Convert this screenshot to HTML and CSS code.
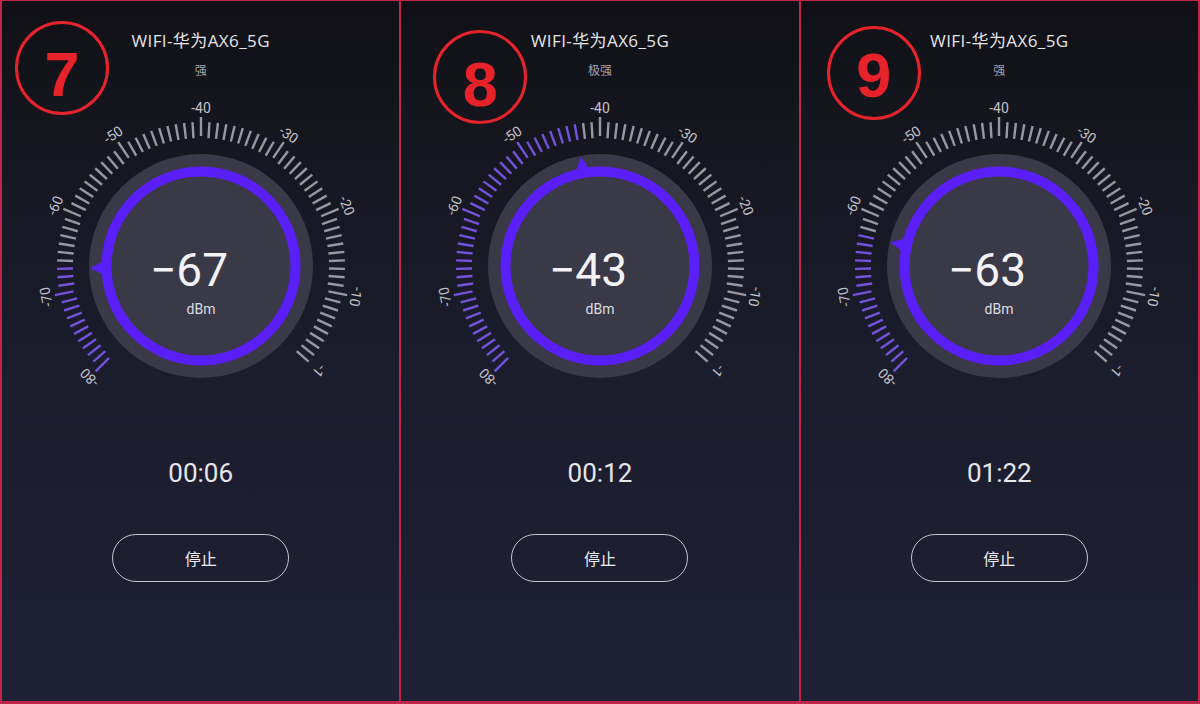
FILE: index.html
```html
<!DOCTYPE html>
<html lang="zh-CN">
<head>
    <meta charset="UTF-8">
    <title>WiFi 信号强度</title>
    <meta name="viewport" content="width=device-width, initial-scale=1">
    <link rel="stylesheet" href="styles.css">
</head>
<body>
    <div class="screens">
        <div class="panel">
            <div class="mark mark-7">7</div>
            <div class="ssid">WIFI-华为AX6_5G</div>
            <div class="level">强</div>
            <svg class="gauge" data-value="-67" width="360" height="320" viewBox="0 0 360 320"></svg>
            <div class="timer">00:06</div>
            <button class="stop-btn">停止</button>
        </div>
        <div class="panel">
            <div class="mark mark-8">8</div>
            <div class="ssid">WIFI-华为AX6_5G</div>
            <div class="level">极强</div>
            <svg class="gauge" data-value="-43" width="360" height="320" viewBox="0 0 360 320"></svg>
            <div class="timer">00:12</div>
            <button class="stop-btn">停止</button>
        </div>
        <div class="panel">
            <div class="mark mark-9">9</div>
            <div class="ssid">WIFI-华为AX6_5G</div>
            <div class="level">强</div>
            <svg class="gauge" data-value="-63" width="360" height="320" viewBox="0 0 360 320"></svg>
            <div class="timer">01:22</div>
            <button class="stop-btn">停止</button>
        </div>
    </div>
    <script>
        const NS = 'http://www.w3.org/2000/svg';
        const CX = 180, CY = 175;
        const STEP = 3.375; // degrees per dBm, -40 sits at the top

        function make(tag, attrs, text) {
            const node = document.createElementNS(NS, tag);
            for (const k in attrs) node.setAttribute(k, attrs[k]);
            if (text) node.textContent = text;
            return node;
        }

        function pt(deg, r) {
            const rad = deg * Math.PI / 180;
            return [CX + r * Math.sin(rad), CY - r * Math.cos(rad)];
        }

        document.querySelectorAll('.gauge').forEach(svg => {
            const value = Number(svg.dataset.value);

            // Scale ticks
            for (let v = -80; v <= -1; v++) {
                const a = (v + 40) * STEP;
                const major = v % 10 === 0;
                const [x1, y1] = pt(a, major ? 130 : 128);
                const [x2, y2] = pt(a, major ? 149 : 144);
                svg.appendChild(make('line', {
                    x1, y1, x2, y2,
                    class: v <= value ? 'tick on' : 'tick'
                }));
            }

            // Scale labels
            [-80, -70, -60, -50, -40, -30, -20, -10, -1].forEach(v => {
                const a = (v + 40) * STEP;
                const [x, y] = pt(a, 158);
                svg.appendChild(make('text', {
                    x, y,
                    class: 'scale-label',
                    transform: `rotate(${a} ${x} ${y})`
                }, String(v)));
            });

            // Dial
            svg.appendChild(make('circle', { cx: CX, cy: CY, r: 112, class: 'disc' }));
            svg.appendChild(make('circle', { cx: CX, cy: CY, r: 94.5, class: 'ring' }));

            // Pointer notch on the ring
            const a = (value + 40) * STEP;
            const tip = pt(a, 111);
            const l = pt(a - 4.2, 97);
            const r = pt(a + 4.2, 97);
            svg.appendChild(make('polygon', {
                points: `${tip.join(',')} ${l.join(',')} ${r.join(',')}`,
                class: 'notch'
            }));

            // Reading
            svg.appendChild(make('text', { x: CX - 12, y: 195, class: 'reading' }, '−' + Math.abs(value)));
            svg.appendChild(make('text', { x: CX, y: 223, class: 'unit' }, 'dBm'));
        });
    </script>
</body>
</html>
```

FILE: styles.css
```css
body { margin: 0; background: #c0264a; font-family: Roboto, "Noto Sans CJK SC", sans-serif; }
.screens { display: flex; gap: 2px; width: 1200px; height: 704px; padding: 1px 2px 3px; box-sizing: border-box; }
.panel { flex: 1; position: relative; display: flex; flex-direction: column; align-items: center; padding-top: 30px; background: linear-gradient(180deg, #101016 0%, #16161f 20%, #1b1c2c 50%, #1e2034 100%); }

.ssid { font-family: "Open Sans", "Noto Sans CJK SC", sans-serif; font-size: 17px; letter-spacing: 0.4px; line-height: 20px; color: #e4e4e8; }
.level { margin-top: 12px; font-size: 12px; line-height: 16px; color: #a4a4ac; }
.gauge { display: block; margin-top: 12px; }
.timer { margin-top: 47px; font-size: 26px; line-height: 30px; color: #e6e6ea; }
.stop-btn { margin-top: 46px; width: 177px; height: 48px; border: 1.5px solid #c4c4cc; border-radius: 24px; background: transparent; color: #ececf0; font-family: Roboto, "Noto Sans CJK SC", sans-serif; font-size: 16px; }

.tick { stroke: #9898a2; stroke-width: 2.4; }
.tick.on { stroke: #7453dc; }
.scale-label { font-size: 14px; fill: #c2c2ca; text-anchor: middle; dominant-baseline: central; }
.disc { fill: #3a3948; }
.ring { fill: none; stroke: #5a1ff8; stroke-width: 10; }
.notch { fill: #5a1ff8; }
.reading { font-size: 46px; fill: #f2f2f4; text-anchor: middle; }
.unit { font-size: 14px; fill: #dcdce2; text-anchor: middle; }

/* red hand-drawn step markers over the screenshots */
.mark { position: absolute; width: 94px; height: 94px; border: 3.5px solid #e5232b; border-radius: 50%; display: flex; align-items: center; justify-content: center; padding-top: 12px; box-sizing: border-box; color: #e8222a; font-family: "Liberation Sans", Arial, sans-serif; font-weight: bold; font-size: 63px; }
.mark-7 { left: 13px; top: 20px; }
.mark-8 { left: 32px; top: 29px; padding-top: 14px; }
.mark-9 { left: 26px; top: 25px; padding-top: 4px; }
```
